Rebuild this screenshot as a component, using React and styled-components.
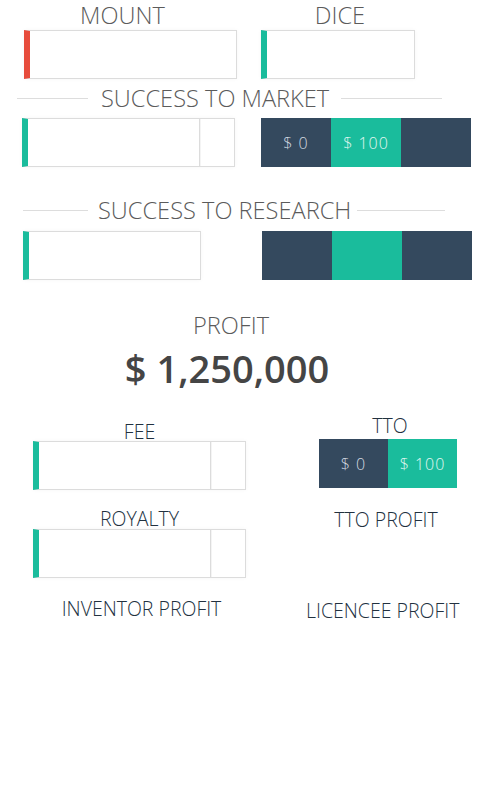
import React from "react";
import styled, { createGlobalStyle } from "styled-components";

const Global = createGlobalStyle`
  body {
    margin: 0;
    background: #fff;
    font-family: "Open Sans", "Liberation Sans", sans-serif;
  }
`;

const Page = styled.div`
  width: 480px;
  min-height: 800px;
  background: #fff;
  color: #555;
`;

const TopRow = styled.div`
  display: flex;
  align-items: flex-start;
`;

const Column = styled.div`
  display: flex;
  flex-direction: column;
  width: ${(p) => p.$width}px;
  margin-left: ${(p) => p.$offset || 0}px;
  padding-top: ${(p) => p.$top || 0}px;
`;

const Title = styled.div`
  font-size: 23.6px;
  font-weight: 300;
  line-height: ${(p) => p.$line || 28}px;
  color: #5b5b5b;
  text-align: center;
  white-space: nowrap;
  margin-top: ${(p) => p.$top || 0}px;
  margin-bottom: ${(p) => p.$bottom || 0}px;
  margin-left: ${(p) => p.$shift || 0}px;
`;

const Label = styled.div`
  font-size: 19.5px;
  font-weight: 300;
  line-height: 22px;
  color: #22313f;
  text-align: center;
  white-space: nowrap;
  margin-top: ${(p) => p.$top || 0}px;
  margin-bottom: ${(p) => p.$bottom || 0}px;
  margin-left: ${(p) => p.$shift || 0}px;
`;

const Box = styled.div`
  display: flex;
  box-sizing: border-box;
  width: ${(p) => p.$width}px;
  height: 49px;
  margin-left: ${(p) => p.$offset || 0}px;
  border: 1px solid #dcdcdc;
  border-left: 6px solid ${(p) => p.$accent};
  background: #fff;
  box-shadow: 0 0 4px rgba(0, 0, 0, 0.04);
`;

const BoxMain = styled.div`
  flex: 1;
`;

const Addon = styled.div`
  width: 34px;
  border-left: 1px solid #dcdcdc;
  box-shadow: inset 1px 0 0 #f4f4f4;
`;

const Header = styled.div`
  display: flex;
  align-items: center;
  width: ${(p) => p.$width}px;
  margin-left: ${(p) => p.$offset}px;
  margin-top: ${(p) => p.$top}px;
`;

const Rule = styled.div`
  height: 1px;
  background: #dddddd;
  ${(p) => (p.$width ? `width: ${p.$width}px;` : "flex: 1;")}
  margin: 0 ${(p) => p.$right || 0}px 0 ${(p) => p.$left || 0}px;
`;

const HeaderText = styled.span`
  font-size: 23.6px;
  font-weight: 300;
  line-height: 28px;
  color: #5b5b5b;
  white-space: nowrap;
`;

const Row = styled.div`
  display: flex;
  align-items: flex-start;
  margin-top: ${(p) => p.$top}px;
  padding-left: ${(p) => p.$left}px;
  gap: ${(p) => p.$gap}px;
`;

const Segments = styled.div`
  display: flex;
  height: 49px;
`;

const Segment = styled.div`
  width: ${(p) => p.$width || 70}px;
  display: flex;
  align-items: center;
  justify-content: center;
  background: ${(p) => (p.$active ? "#1abc9c" : "#34495e")};
  color: ${(p) => (p.$active ? "#e2f7f1" : "#d5dbe1")};
  font-size: 16px;
  font-weight: 300;
  letter-spacing: 1px;
`;

const Amount = styled.div`
  font-size: 38px;
  font-weight: 600;
  line-height: 44px;
  color: #454545;
  text-align: center;
  margin-top: 7px;
  margin-left: -26px;
`;

const Lower = styled.div`
  display: flex;
  align-items: flex-start;
`;

function Field({ accent, width, addon }) {
  return (
    <Box $width={width} $accent={accent}>
      <BoxMain />
      {addon && <Addon />}
    </Box>
  );
}

function Toggle({ values, width }) {
  return (
    <Segments>
      {values.map((v, i) => (
        <Segment key={i} $active={i === 1} $width={width}>
          {v}
        </Segment>
      ))}
    </Segments>
  );
}

export default function App() {
  return (
    <Page>
      <Global />
      <TopRow>
        <Column $width={229} $offset={8}>
          <Title $line={30}>MOUNT</Title>
          <Box $width={213} $offset={16} $accent="#e74c3c">
            <BoxMain />
          </Box>
        </Column>
        <Column $width={154} $offset={24}>
          <Title $line={30} $shift={4}>DICE</Title>
          <Field accent="#1abc9c" width={154} />
        </Column>
      </TopRow>

      <Header $width={425} $offset={17} $top={5}>
        <Rule $width={71} $right={13} />
        <HeaderText>SUCCESS TO MARKET</HeaderText>
        <Rule $left={12} />
      </Header>
      <Row $top={6} $left={22} $gap={26}>
        <Field accent="#1abc9c" width={213} addon />
        <Toggle values={["$ 0", "$ 100", ""]} width={70} />
      </Row>

      <Header $width={422} $offset={23} $top={29}>
        <Rule $width={65} $right={10} />
        <HeaderText>SUCCESS TO RESEARCH</HeaderText>
        <Rule $left={6} />
      </Header>
      <Row $top={7} $left={23} $gap={61}>
        <Field accent="#1abc9c" width={178} />
        <Toggle values={["", "", ""]} width={70} />
      </Row>

      <Title $top={31} $shift={-18}>PROFIT</Title>
      <Amount>$ 1,250,000</Amount>

      <Lower>
        <Column $width={213} $offset={33} $top={31}>
          <Label $bottom={-2}>FEE</Label>
          <Field accent="#1abc9c" width={213} addon />
          <Label $top={18} $bottom={-1}>ROYALTY</Label>
          <Field accent="#1abc9c" width={213} addon />
          <Label $top={20} $shift={4}>INVENTOR PROFIT</Label>
        </Column>
        <Column $width={139} $offset={73} $top={25}>
          <Label $bottom={2} $shift={3}>TTO</Label>
          <Toggle values={["$ 0", "$ 100"]} width={69} />
          <Label $top={21} $shift={-5}>TTO PROFIT</Label>
          <Label $top={69} $shift={-13}>LICENCEE PROFIT</Label>
        </Column>
      </Lower>
    </Page>
  );
}
